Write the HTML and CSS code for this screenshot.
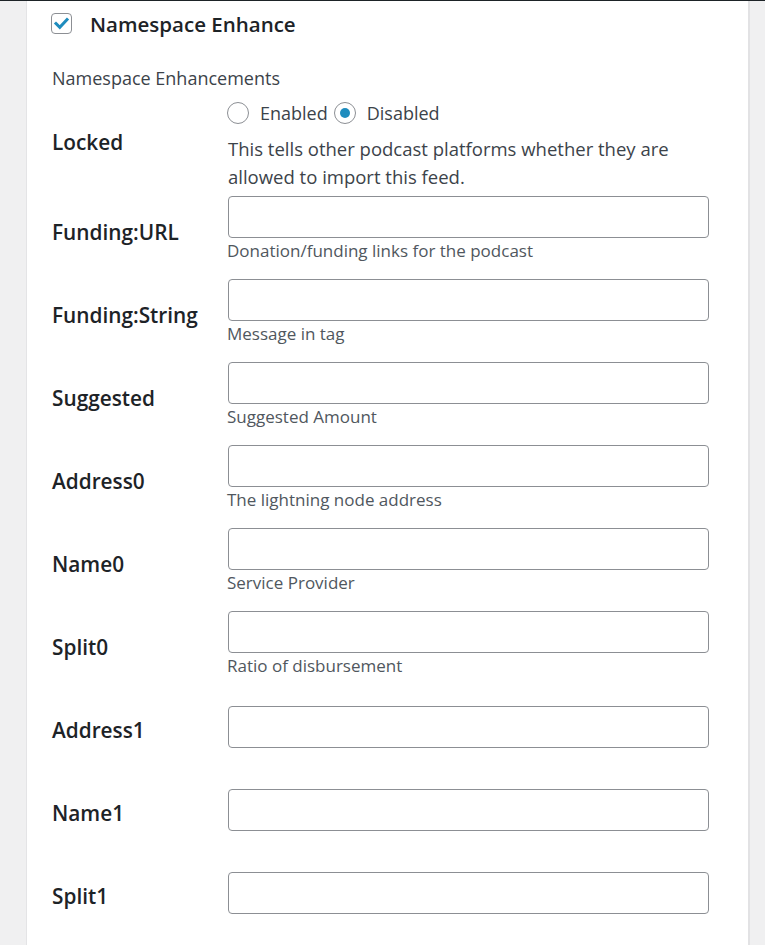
FILE: index.html
```html
<!DOCTYPE html>
<html lang="en">
<head>
<meta charset="utf-8">
<title>Namespace Enhance</title>
<link rel="stylesheet" href="styles.css">
</head>
<body>
<div class="card">
  <div class="head">
    <span class="checkbox">
      <svg width="21" height="21" viewBox="0 0 21 21"><path d="M5 10.5 L8.8 14.3 L16 6.6" fill="none" stroke="#1e8cbe" stroke-width="3" stroke-linecap="square" stroke-linejoin="miter"/></svg>
    </span>
    <h2 class="title">Namespace Enhance</h2>
  </div>
  <p class="section">Namespace Enhancements</p>
  <div class="table">
    <div class="row row-locked">
      <div class="label">Locked</div>
      <div class="field">
        <div class="radios">
          <span class="radio"></span><span class="rlabel">Enabled</span>
          <span class="radio checked"></span><span class="rlabel">Disabled</span>
        </div>
        <p class="longdesc">This tells other podcast platforms whether they are allowed to import this feed.</p>
      </div>
    </div>
    <div class="row">
      <div class="label">Funding:URL</div>
      <div class="field"><div class="input"></div><p class="desc">Donation/funding links for the podcast</p></div>
    </div>
    <div class="row">
      <div class="label">Funding:String</div>
      <div class="field"><div class="input"></div><p class="desc">Message in tag</p></div>
    </div>
    <div class="row">
      <div class="label">Suggested</div>
      <div class="field"><div class="input"></div><p class="desc">Suggested Amount</p></div>
    </div>
    <div class="row">
      <div class="label">Address0</div>
      <div class="field"><div class="input"></div><p class="desc">The lightning node address</p></div>
    </div>
    <div class="row">
      <div class="label">Name0</div>
      <div class="field"><div class="input"></div><p class="desc">Service Provider</p></div>
    </div>
    <div class="row">
      <div class="label">Split0</div>
      <div class="field"><div class="input"></div><p class="desc">Ratio of disbursement</p></div>
    </div>
    <div class="row">
      <div class="label">Address1</div>
      <div class="field"><div class="input"></div></div>
    </div>
    <div class="row">
      <div class="label">Name1</div>
      <div class="field"><div class="input"></div></div>
    </div>
    <div class="row">
      <div class="label">Split1</div>
      <div class="field"><div class="input"></div></div>
    </div>
  </div>
</div>
</body>
</html>
```
FILE: styles.css
```css
html, body {
  margin: 0;
  padding: 0;
}
body {
  background: #f0f0f1;
  border-top: 1px solid #1d2327;
  font-family: "Open Sans", "Noto Sans", sans-serif;
  color: #1d2327;
  height: 944px;
  overflow: hidden;
}
.card {
  margin-left: 26px;
  width: 724px;
  min-height: 960px;
  background: #fff;
  border-left: 1px solid #e4e4e6;
  border-right: 2px solid #e2e2e4;
  padding-left: 24px;
  box-sizing: border-box;
}
.head {
  display: flex;
  align-items: center;
  padding-top: 12px;
  height: 21px;
}
.checkbox {
  width: 21px;
  height: 21px;
  box-sizing: border-box;
  border: 1px solid #8c8f94;
  border-radius: 4px;
  display: block;
  position: relative;
}
.checkbox svg {
  position: absolute;
  left: -1px;
  top: -1px;
}
.title {
  margin: 0 0 0 18px;
  font-size: 20.5px;
  font-weight: 600;
  line-height: 28px;
}
.section {
  margin: 30px 0 0 1px;
  font-size: 18px;
  line-height: 28px;
  color: #3c434a;
}
.table {
  margin-top: 4px;
}
.row {
  display: flex;
  align-items: center;
  height: 83px;
}
.row-locked {
  height: 91.5px;
}
.label {
  width: 177px;
  font-size: 20.8px;
  font-weight: 600;
  padding-left: 1px;
  padding-top: 5px;
  box-sizing: border-box;
  line-height: 28px;
}
.row-locked .label {
  padding-top: 0;
}
.row-locked .field {
  align-self: flex-start;
  padding-top: 3px;
}
.field {
  width: 481px;
}
.radios {
  display: flex;
  align-items: center;
  height: 28px;
  margin-left: -1px;
}
.radio {
  width: 22px;
  height: 22px;
  box-sizing: border-box;
  border: 1px solid #8c8f94;
  border-radius: 50%;
  position: relative;
  flex: none;
}
.radio.checked::after {
  content: "";
  position: absolute;
  left: 5px;
  top: 5px;
  width: 10px;
  height: 10px;
  border-radius: 50%;
  background: #1e8cbe;
}
.rlabel {
  font-size: 18px;
  color: #3c434a;
  margin-left: 11px;
  margin-right: 6px;
}
.longdesc {
  margin: 8px 0 0 0;
  font-size: 18.5px;
  line-height: 28px;
  color: #3c434a;
}
.input {
  height: 42px;
  box-sizing: border-box;
  border: 1px solid #8c8f94;
  border-radius: 4px;
  background: #fff;
}
.desc {
  margin: 2px 0 0 -1px;
  font-size: 17px;
  line-height: 22px;
  color: #50575e;
}
```
